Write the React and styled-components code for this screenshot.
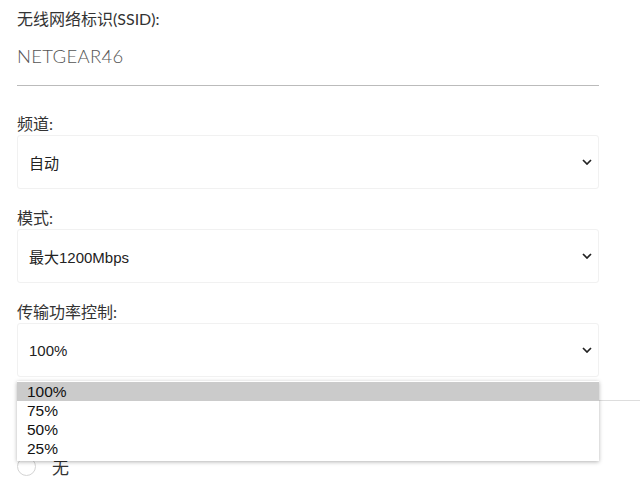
import React from 'react';
import styled, { createGlobalStyle } from 'styled-components';

const GlobalStyle = createGlobalStyle`
  html, body {
    margin: 0;
    padding: 0;
    background: #fff;
    overflow: hidden;
  }
  body {
    font-family: "Lato", "Noto Sans CJK SC", sans-serif;
    color: #333;
  }
`;

const Page = styled.div`
  width: 640px;
  height: 483px;
  overflow: hidden;
  padding: 9px 0 0 17px;
  box-sizing: border-box;
`;

const Form = styled.div`
  width: 582px;
`;

const Field = styled.div`
  position: relative;
  margin-bottom: ${p => p.$gap || 19}px;
`;

const Label = styled.div`
  font-size: 16px;
  line-height: 20px;
  height: 20px;
  color: #333;
  margin-bottom: 1px;
`;

const TextInput = styled.div`
  font-family: "Lato", "Noto Sans CJK SC", sans-serif;
  font-weight: 300;
  font-size: 18.5px;
  letter-spacing: 0.3px;
  color: #555;
  height: 55px;
  line-height: 52px;
  border-bottom: 1px solid #bbb;
`;

const SelectBox = styled.div`
  height: 54px;
  box-sizing: border-box;
  border: 1px solid #f1f1f1;
  border-radius: 3px;
  display: flex;
  align-items: center;
  justify-content: space-between;
  padding: 0 6px 0 11px;
  font-family: "Liberation Sans", "Noto Sans CJK SC", sans-serif;
  font-size: 15px;
  color: #222;
`;

const Chevron = () => (
  <svg width="10" height="6" viewBox="0 0 10 6">
    <polyline points="1,1 5,5 9,1" fill="none" stroke="#222" strokeWidth="1.7" />
  </svg>
);

const OptionList = styled.div`
  position: absolute;
  top: 79px;
  left: 0;
  right: 0;
  z-index: 10;
  background: #fff;
  padding: 1px 0 3px;
  box-shadow: 0 1px 4px rgba(0, 0, 0, 0.3);
  font-family: "Liberation Sans", sans-serif;
  font-size: 15.5px;
  color: #111;
`;

const Option = styled.div`
  height: 19px;
  line-height: 19px;
  padding-left: 10px;
  background: ${p => (p.$active ? '#cbcbcb' : 'transparent')};
`;

const Divider = styled.div`
  height: 1px;
  background: #ddd;
  margin-right: -60px;
  margin-top: 23px;
`;

const RadioRow = styled.div`
  display: flex;
  align-items: center;
  gap: 16px;
  margin-top: 53px;
  font-family: "Noto Sans CJK SC", sans-serif;
  font-size: 17px;
  color: #333;
`;

const RadioCircle = styled.span`
  width: 17px;
  height: 17px;
  border: 1px solid #d4d4d4;
  border-radius: 50%;
`;

const selects = [
  { label: '频道:', value: '自动' },
  { label: '模式:', value: '最大1200Mbps' },
];

export default function App() {
  return (
    <Page>
      <GlobalStyle />
      <Form>
        <Field $gap={28}>
          <Label>无线网络标识(SSID):</Label>
          <TextInput>NETGEAR46</TextInput>
        </Field>
        {selects.map(s => (
          <Field key={s.label}>
            <Label>{s.label}</Label>
            <SelectBox>
              <span>{s.value}</span>
              <Chevron />
            </SelectBox>
          </Field>
        ))}
        <Field $gap={0}>
          <Label>传输功率控制:</Label>
          <SelectBox>
            <span>100%</span>
            <Chevron />
          </SelectBox>
          <OptionList>
            <Option $active>100%</Option>
            <Option>75%</Option>
            <Option>50%</Option>
            <Option>25%</Option>
          </OptionList>
          <Divider />
          <RadioRow>
            <RadioCircle />
            <span>无</span>
          </RadioRow>
        </Field>
      </Form>
    </Page>
  );
}
